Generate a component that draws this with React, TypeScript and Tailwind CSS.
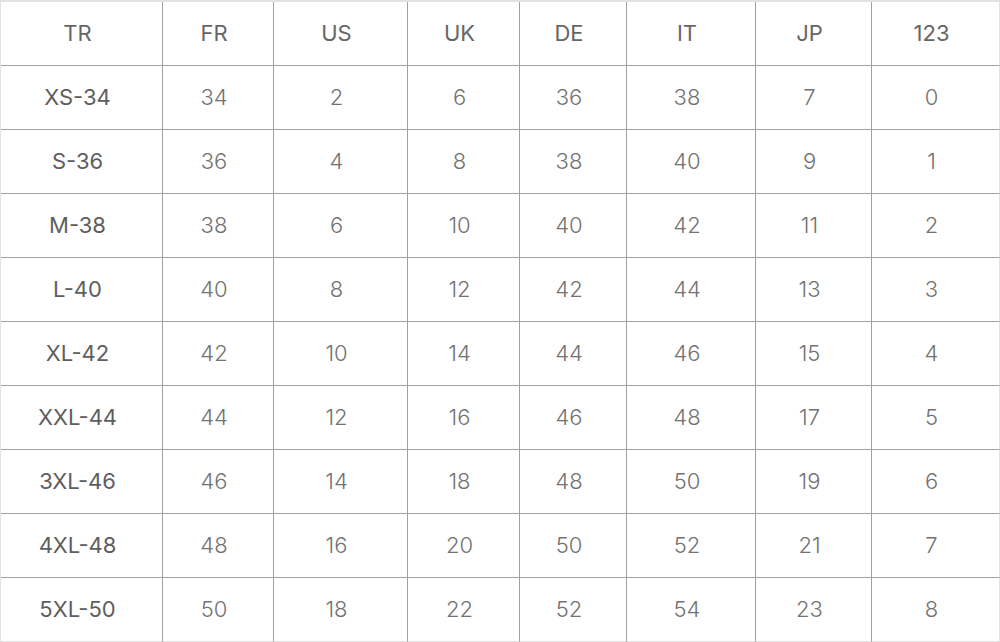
const headers = ["TR", "FR", "US", "UK", "DE", "IT", "JP", "123"];

const rows: string[][] = [
  ["XS-34", "34", "2", "6", "36", "38", "7", "0"],
  ["S-36", "36", "4", "8", "38", "40", "9", "1"],
  ["M-38", "38", "6", "10", "40", "42", "11", "2"],
  ["L-40", "40", "8", "12", "42", "44", "13", "3"],
  ["XL-42", "42", "10", "14", "44", "46", "15", "4"],
  ["XXL-44", "44", "12", "16", "46", "48", "17", "5"],
  ["3XL-46", "46", "14", "18", "48", "50", "19", "6"],
  ["4XL-48", "48", "16", "20", "50", "52", "21", "7"],
  ["5XL-50", "50", "18", "22", "52", "54", "23", "8"],
];

export default function App() {
  return (
    <div
      className="w-[1000px] h-[642px] bg-white overflow-hidden border-t-2 border-l border-[#e2e2e2]"
      style={{ fontFamily: '"Inter", "Lato", sans-serif' }}
    >
      <div className="grid grid-cols-[162px_111px_134px_112px_107px_129px_116px_128px] grid-rows-[repeat(10,64px)]">
        {headers.map((h, i) => (
          <div
            key={h}
            className={`flex items-center justify-center pr-2 border-b border-b-[#a0a0a0] text-[22px] text-[#666666] ${
              i === headers.length - 1 ? "border-r border-r-[#e2e2e2]" : "border-r border-r-[#a0a0a0]"
            }`}
          >
            {h}
          </div>
        ))}
        {rows.map((row, r) =>
          row.map((cell, c) => (
            <div
              key={`${r}-${c}`}
              className={`flex items-center justify-center pr-2 text-[22px] ${
                c === 0 ? "text-[#5e5e5e]" : "text-[#727272] font-light"
              } ${
                c === row.length - 1 ? "border-r border-r-[#e2e2e2]" : "border-r border-r-[#a0a0a0]"
              } ${
                r === rows.length - 1 ? "border-b border-b-[#e2e2e2]" : "border-b border-b-[#a0a0a0]"
              }`}
            >
              {cell}
            </div>
          ))
        )}
      </div>
    </div>
  );
}
